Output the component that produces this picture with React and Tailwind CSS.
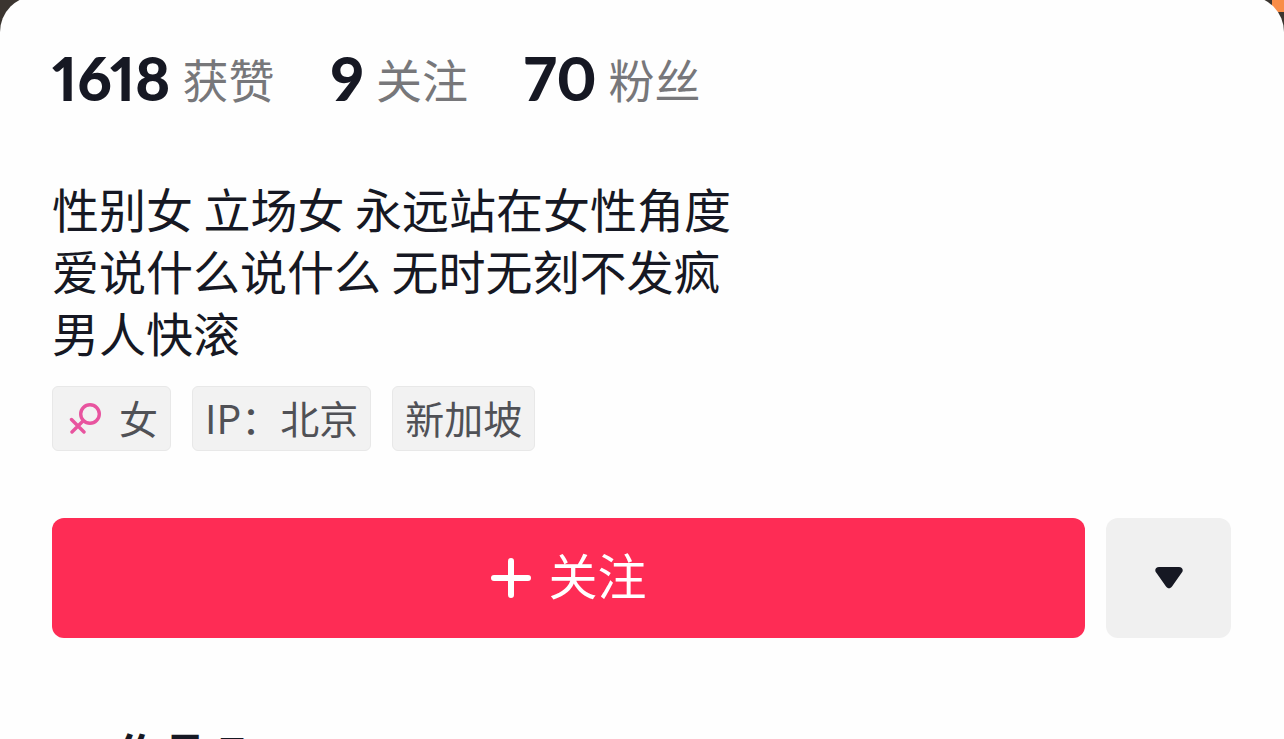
const stats = [
  { value: "1618", label: "获赞" },
  { value: "9", label: "关注" },
  { value: "70", label: "粉丝" },
];

const bio = ["性别女 立场女 永远站在女性角度", "爱说什么说什么 无时无刻不发疯", "男人快滚"];

function FemaleIcon() {
  return (
    <svg width="32" height="32" viewBox="0 0 32 32" fill="none" stroke="#e8549f" strokeWidth="3.4" strokeLinecap="round" aria-hidden="true">
      <circle cx="21" cy="12" r="9.3" />
      <path d="M14 19 3 30M2.500 17.500 15 30" />
    </svg>
  );
}

function Tag({ children }) {
  return (
    <li className="flex h-[65px] items-center rounded-md border border-[#e8e8e8] bg-[#f2f2f2] px-3 pb-0.5 text-[39px] leading-none text-[#505156]">
      {children}
    </li>
  );
}

export default function App() {
  return (
    <div className="h-screen overflow-hidden bg-[#3b3530] font-['Noto_Sans_CJK_SC',sans-serif] text-[#161823]">
      <div className="relative">
        <span className="absolute right-0 top-0 h-3 w-3 rounded-bl-md bg-[#f98d48]" />
      </div>
      <main className="relative -mt-1 min-h-screen rounded-t-[36px] bg-[#fefefe] pl-[52px] pr-[53px] pt-[46px]">
        <ul className="flex gap-14">
          {stats.map((stat) => (
            <li key={stat.label} className="flex items-center gap-3">
              <strong className="font-[Lato,sans-serif] text-[60px] leading-[72px] font-black proportional-nums">{stat.value}</strong>
              <span className="text-[46px] leading-[66px] text-[#77777a]">{stat.label}</span>
            </li>
          ))}
        </ul>

        <div className="mt-[63px] text-[47px] leading-[62px]">
          {bio.map((line) => (
            <p key={line}>{line}</p>
          ))}
        </div>

        <ul className="mt-[23px] flex gap-[21px]">
          <Tag>
            <span className="flex items-center gap-[18px] pl-1">
              <FemaleIcon />女
            </span>
          </Tag>
          <Tag>IP：北京</Tag>
          <Tag>新加坡</Tag>
        </ul>

        <div className="mt-[67px] flex gap-[21px]">
          <button type="button" className="flex h-[120px] flex-1 items-center justify-center gap-4 rounded-xl bg-[#fe2c55] text-[49px] text-white">
            <svg width="42" height="42" viewBox="0 0 42 42" stroke="currentColor" strokeWidth="6" strokeLinecap="round" aria-hidden="true">
              <path d="M21 4v34M4 21h34" />
            </svg>
            <span className="pb-2">关注</span>
          </button>
          <button type="button" aria-label="更多" className="flex h-[120px] w-[125px] items-center justify-center rounded-xl bg-[#f0f0f0]">
            <svg width="28" height="22" viewBox="0 0 28 22" fill="currentColor" aria-hidden="true">
              <path d="M4 0h20c3.500 0 5 3.500 2.500 6L17 19.500c-1.700 2.400-4.300 2.400-6 0L1.500 6C-1 3.500.5 0 4 0z" />
            </svg>
          </button>
        </div>

        <h2 className="mt-[83px] pl-16 text-[46px] leading-[62px] font-bold">作品 7</h2>
      </main>
    </div>
  );
}
